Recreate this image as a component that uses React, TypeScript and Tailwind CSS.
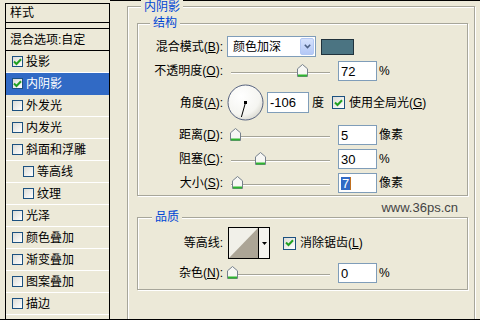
import React from 'react';

type Effect = { label: string; checked?: boolean; selected?: boolean; indent?: boolean };

const effects: Effect[] = [
  { label: '投影', checked: true },
  { label: '内阴影', checked: true, selected: true },
  { label: '外发光' },
  { label: '内发光' },
  { label: '斜面和浮雕' },
  { label: '等高线', indent: true },
  { label: '纹理', indent: true },
  { label: '光泽' },
  { label: '颜色叠加' },
  { label: '渐变叠加' },
  { label: '图案叠加' },
  { label: '描边' },
];

const Tick = () => (
  <svg width="9" height="8" viewBox="0 0 9 8">
    <path d="M1 3.5 L3.5 6 L8 1.2" fill="none" stroke="#21a121" strokeWidth="2" />
  </svg>
);

const CheckBox = ({ checked, small }: { checked?: boolean; small?: boolean }) => (
  <span
    className={
      small
        ? 'flex h-[11px] w-[11px] shrink-0 items-center justify-center border border-[#1c5180] bg-linear-to-br from-[#dcdcd7] to-white'
        : 'flex h-[13px] w-[13px] shrink-0 items-center justify-center border border-[#1c5180] bg-linear-to-br from-[#dcdcd7] to-white'
    }
  >
    {checked && <Tick />}
  </span>
);

// trackbar with the xp style thumb
const Slider = ({ at }: { at: number }) => (
  <div className="relative ml-[8px] h-[14px] w-[99px] shrink-0">
    <div className="absolute left-0 right-0 top-[8px] h-[2px] border-t border-[#a5a498] bg-white" />
    <svg className="absolute top-0" style={{ left: at }} width="11" height="13" viewBox="0 0 11 13">
      <path d="M0.5 4.8 L5.5 0.5 L10.5 4.8 V12.5 H0.5 Z" fill="#f7f7f4" stroke="#76808c" />
      <path d="M1 11.5 H10" stroke="#2fb52f" strokeWidth="2" />
    </svg>
  </div>
);

const Field = ({ children }: { children: React.ReactNode }) => (
  <div className="ml-[8px] flex h-[20px] w-[39px] shrink-0 items-center border border-[#7f9db9] bg-white pl-[2px] font-['Liberation_Sans',sans-serif] text-[13px] leading-none">
    {children}
  </div>
);

const Key = ({ k }: { k: string }) => <span className="underline underline-offset-[1px]">{k}</span>;

const Label = ({ children }: { children: React.ReactNode }) => (
  <div className="w-[85px] shrink-0 text-right">{children}</div>
);

const Unit = ({ text }: { text: string }) => <span className="ml-[2px]">{text}</span>;

const SliderRow = ({ label, k, at, value, unit }: { label: string; k: string; at: number; value: React.ReactNode; unit: string }) => (
  <div className="mt-[2px] flex h-[22px] items-center">
    <Label>
      {label}(<Key k={k} />):
    </Label>
    <Slider at={at} />
    <Field>{value}</Field>
    <Unit text={unit} />
  </div>
);

const Dial = () => (
  <svg className="ml-[4px] shrink-0" width="37" height="37" viewBox="0 0 37 37">
    <defs>
      <radialGradient id="dialFill" cx="38%" cy="32%" r="75%">
        <stop offset="0" stopColor="#ffffff" />
        <stop offset="0.7" stopColor="#f5f5f1" />
        <stop offset="1" stopColor="#d6d5cb" />
      </radialGradient>
    </defs>
    <circle cx="18.5" cy="18.5" r="17.5" fill="url(#dialFill)" stroke="#56627e" />
    <line x1="18.5" y1="18.5" x2="14.4" y2="33" stroke="#000" strokeWidth="1" />
    <rect x="17" y="17" width="3" height="3" fill="#000" />
  </svg>
);

export default function App() {
  return (
    <div className="flex h-[320px] w-[480px] overflow-hidden border-b border-black bg-[#ece9d8] font-['Liberation_Sans','Noto_Sans_CJK_SC',sans-serif] text-[12px] leading-[14px] text-black">
      {/* style list */}
      <div className="ml-[5px] mt-[3px] flex w-[105px] shrink-0 flex-col border-x border-t border-black">
        <div className="flex h-[19px] items-center border-b border-black pl-[4px]">样式</div>
        <div className="h-[5px]" />
        <div className="flex h-[23px] items-center border-y border-black pl-[4px]">混合选项:自定</div>
        {effects.map(e => (
          <div
            key={e.label}
            className={
              e.selected
                ? 'flex h-[22px] items-center gap-[3px] border-b border-[#316ac5] bg-[#316ac5] pl-[6px] text-white'
                : e.indent
                  ? 'flex h-[22px] items-center gap-[3px] border-b border-white pl-[17px]'
                  : 'flex h-[22px] items-center gap-[3px] border-b border-white pl-[6px]'
            }
          >
            <CheckBox checked={e.checked} small />
            <span>{e.label}</span>
          </div>
        ))}
      </div>

      {/* settings */}
      <div className="flex flex-1 flex-col border-t border-black">
        <div className="ml-[17px] mt-[5px] flex h-[330px] w-[348px] shrink-0 flex-col border border-[#a7a69a] shadow-[inset_1px_1px_0_#fff,1px_1px_0_#fff]">
          <span className="-mt-[7px] ml-[13px] self-start bg-[#ece9d8] px-[3px] text-[#0046d5]">内阴影</span>

          <div className="ml-[9px] mr-[6px] mt-[9px] flex h-[173px] shrink-0 flex-col border border-[#a7a69a] shadow-[inset_1px_1px_0_#fff,1px_1px_0_#fff]">
            <span className="-mt-[8px] ml-[12px] self-start bg-[#ece9d8] px-[3px] text-[#0046d5]">结构</span>

            <div className="mt-[5px] flex h-[23px] items-center">
              <Label>
                混合模式(<Key k="B" />):
              </Label>
              <div className="ml-[4px] flex h-[21px] w-[89px] shrink-0 items-center border border-[#7f9db9] bg-white">
                <span className="flex-1 pl-[5px]">颜色加深</span>
                <span className="mr-px flex h-[17px] w-[14px] items-center justify-center rounded-[2px] border border-[#b3c8f4] bg-linear-to-b from-[#d6e2fc] to-[#b4c8f6]">
                  <svg width="7" height="5" viewBox="0 0 7 5">
                    <path d="M0.8 0.8 L3.5 3.5 L6.2 0.8" fill="none" stroke="#4d6185" strokeWidth="1.6" />
                  </svg>
                </span>
              </div>
              <div className="ml-[5px] h-[16px] w-[33px] shrink-0 border border-[#20323c] bg-[#4b7482]" />
            </div>

            <SliderRow label="不透明度" k="O" at={66} value="72" unit="%" />

            <div className="mt-[2px] flex h-[37px] items-center">
              <Label>
                角度(<Key k="A" />):
              </Label>
              <Dial />
              <div className="ml-[3px] flex h-[21px] w-[42px] shrink-0 items-center border border-[#7f9db9] bg-white pl-[2px] font-['Liberation_Sans',sans-serif] text-[13px] leading-none">
                -106
              </div>
              <span className="ml-[3px]">度</span>
              <span className="ml-[8px] flex items-center gap-[4px]">
                <CheckBox checked />
                <span>
                  使用全局光(<Key k="G" />)
                </span>
              </span>
            </div>

            <div className="mt-[1px]" />
            <SliderRow label="距离" k="D" at={-1} value="5" unit="像素" />
            <SliderRow label="阻塞" k="C" at={24} value="30" unit="%" />
            <SliderRow
              label="大小"
              k="S"
              at={1}
              value={
                <>
                  <span className="bg-[#316ac5] px-px text-white">7</span>
                  <span className="h-[13px] w-px bg-[#c07020]" />
                </>
              }
              unit="像素"
            />
          </div>

          <div className="ml-[9px] mr-[6px] flex h-[21px] shrink-0 items-center justify-end pr-[10px] pt-[2px] font-['Liberation_Sans',sans-serif] text-[13px] text-[#444]">
            www.36ps.cn
          </div>

          <div className="ml-[9px] mr-[6px] flex h-[73px] shrink-0 flex-col border border-[#a7a69a] shadow-[inset_1px_1px_0_#fff,1px_1px_0_#fff]">
            <span className="-mt-[8px] ml-[14px] self-start bg-[#ece9d8] px-[3px] text-[#0046d5]">品质</span>

            <div className="mt-[3px] flex h-[32px] items-center">
              <Label>等高线:</Label>
              <div className="ml-[5px] flex h-[32px] w-[42px] shrink-0 border border-black bg-white">
                <svg width="29" height="30" viewBox="0 0 29 30">
                  <rect width="29" height="30" fill="#f1f0e9" />
                  <polygon points="0,30 29,0 29,30" fill="#aca596" />
                </svg>
                <div className="w-px bg-black" />
                <div className="flex flex-1 items-center justify-center bg-[#f4f3ee]">
                  <svg width="5" height="3" viewBox="0 0 5 3">
                    <polygon points="0,0 5,0 2.5,3" fill="#000" />
                  </svg>
                </div>
              </div>
              <span className="ml-[13px] flex items-center gap-[4px]">
                <CheckBox checked />
                <span>
                  消除锯齿(<Key k="L" />)
                </span>
              </span>
            </div>

            <div className="mt-[4px] flex h-[20px] items-center">
              <Label>
                杂色(<Key k="N" />):
              </Label>
              <Slider at={-4} />
              <Field>0</Field>
              <Unit text="%" />
            </div>
          </div>
        </div>
      </div>
    </div>
  );
}
